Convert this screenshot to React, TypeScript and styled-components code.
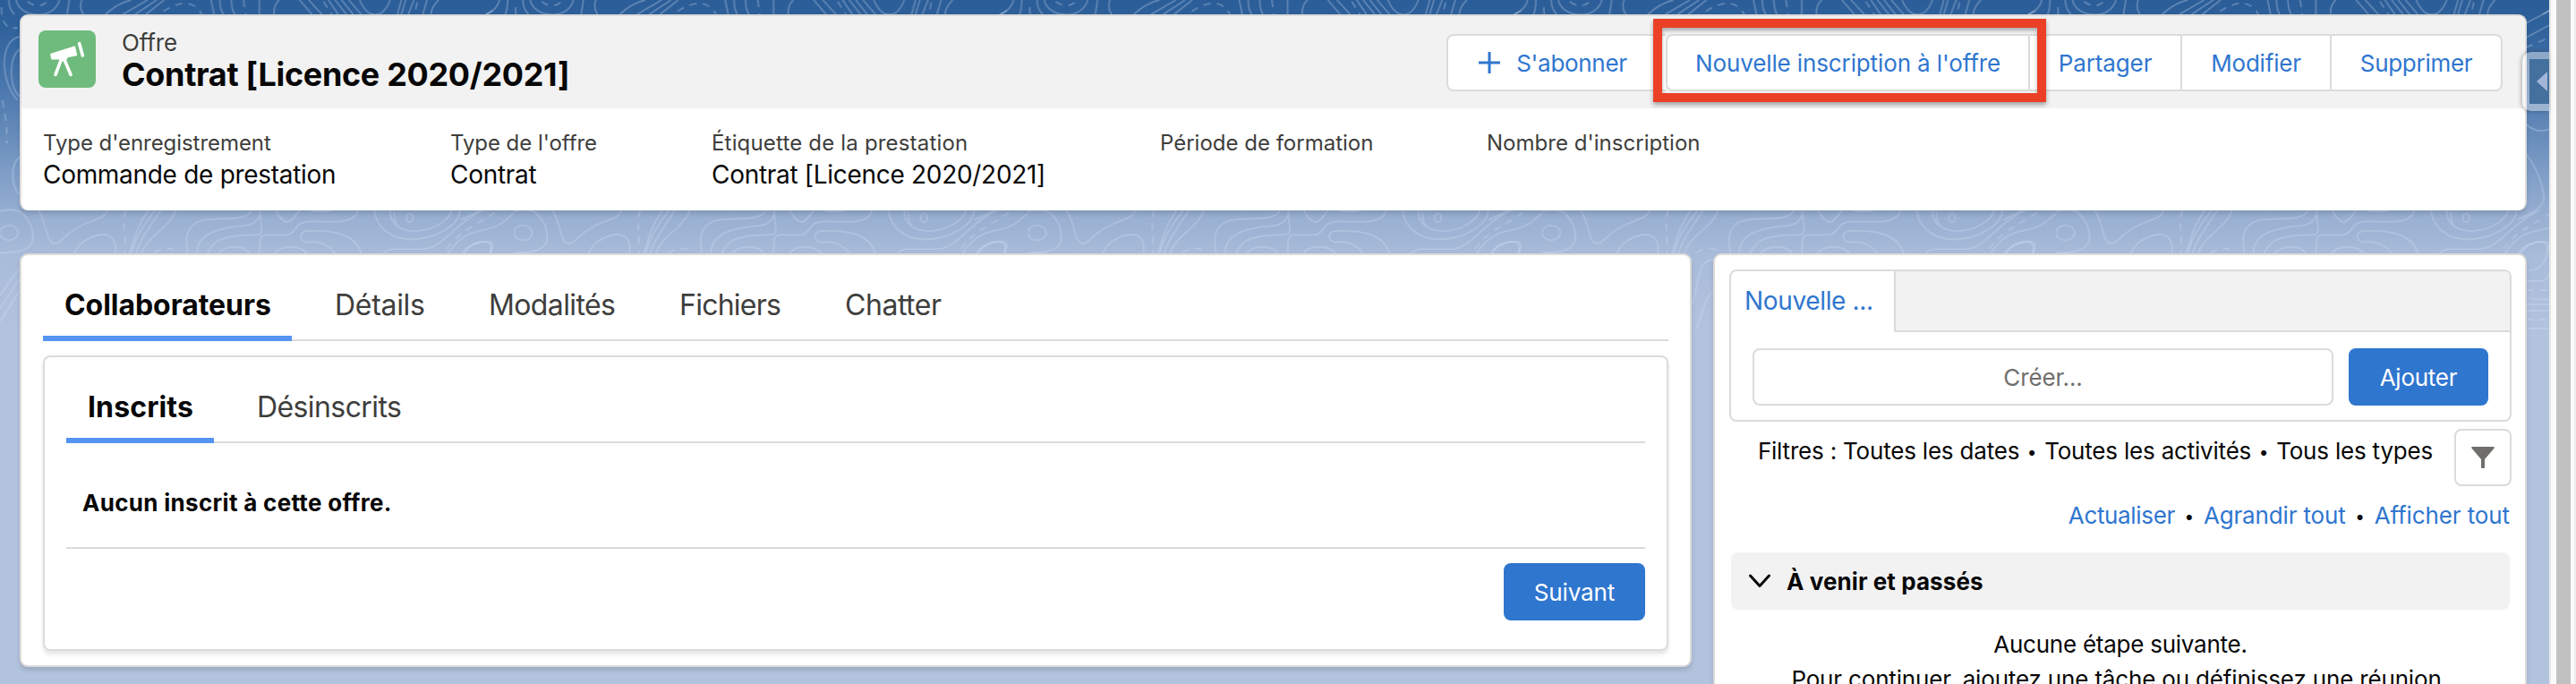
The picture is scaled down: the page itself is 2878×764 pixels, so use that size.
import React from "react";
import styled, { createGlobalStyle, css } from "styled-components";

const GlobalStyle = createGlobalStyle`
  * { box-sizing: border-box; }
  body {
    margin: 0;
    overflow: hidden;
    font-family: Inter, "Liberation Sans", sans-serif;
    font-size: 26px;
    color: #080707;
  }
`;

const line = "#dddbda";
const blue = "#2f76cf";

const Page = styled.div`
  display: flex;
  height: 764px;
  overflow: hidden;
`;

const Main = styled.main`
  position: relative;
  width: 2848px;
  height: 764px;
  padding: 16px 25px 0 22px;
  background: linear-gradient(
    #2b5d98 0px, #2f619b 30px, #4a77ad 98px, #6087b7 138px, #819fc8 198px,
    #97afd1 240px, #a8bbd9 283px, #b2c3de 370px
  );
`;

const Contours = styled.svg`
  position: absolute;
  inset: 0;
  fill: none;
  stroke: #d5e4f7;
  stroke-opacity: 0.3;
  stroke-width: 1.8;
`;

const Content = styled.div`
  position: relative;
`;

const cardBox = css`
  background: #fff;
  border: 2px solid ${line};
  border-radius: 9px;
  box-shadow: 0 4px 5px rgba(0, 0, 0, 0.12);
`;

const HeaderCard = styled.header`
  ${cardBox}
  width: 2801px;
  height: 219px;
  border-bottom: 0;
  overflow: visible;
`;

const HeaderTop = styled.div`
  display: flex;
  align-items: flex-start;
  height: 103px;
  padding: 0 25px 0 19px;
  background: #f2f2f2;
  border-radius: 7px 7px 0 0;
`;

const RecordIcon = styled.svg`
  width: 64px;
  height: 64px;
  margin: 16px 29px 0 0;
  border-radius: 8px;
  background: #6fbb7d;
`;

const RecordTitle = styled.div`
  flex: 1;
  padding-top: 15px;
`;

const Tracked = styled.span<{ $t?: number }>`
  letter-spacing: ${(p) => p.$t ?? 0}px;
  white-space: pre;
`;

const EntityName = styled.div`
  line-height: 30px;
  color: #3e3e3c;
`;

const RecordName = styled.h1`
  margin: 0;
  font-size: 36px;
  line-height: 40px;
`;

const ButtonGroup = styled.div`
  display: flex;
  height: 64px;
  margin-top: 20px;
`;

const GroupButton = styled.div<{ $w: number; $first?: boolean; $round?: "left" | "right" | "none" }>`
  position: relative;
  display: flex;
  align-items: center;
  justify-content: center;
  gap: 17px;
  width: ${(p) => p.$w}px;
  padding-right: ${(p) => (p.$first ? 10 : 0)}px;
  background: #fff;
  color: ${blue};
  border: 2px solid ${line};
  border-left-width: ${(p) => (p.$round === "left" ? 2 : 0)}px;
  border-right-width: ${(p) => (p.$first ? 0 : 2)}px;
  border-radius: ${(p) => (p.$round === "left" ? "8px 0 0 8px" : p.$round === "right" ? "0 8px 8px 0" : "0")};
`;

const Highlight = styled.div`
  position: absolute;
  z-index: 2;
  top: -19px;
  left: -16px;
  width: 439px;
  height: 93px;
  border: 10px solid #eb4026;
  box-shadow: 0 3px 5px rgba(0, 0, 0, 0.35), inset 0 3px 4px rgba(0, 0, 0, 0.3);
`;

const Fields = styled.dl`
  display: grid;
  grid-template-columns: 455px 292px 501px 365px 1fr;
  margin: 0;
  padding: 23px 0 0 24px;
`;

const FieldLabel = styled.dt`
  font-size: 24px;
  line-height: 32px;
  color: #3e3e3c;
`;

const FieldValue = styled.dd`
  margin: 1px 0 0;
  font-size: 28px;
  line-height: 36px;
`;

const Columns = styled.div`
  display: flex;
  gap: 24px;
  margin-top: 48px;
`;

const MainCard = styled.section`
  ${cardBox}
  width: 1868px;
  height: 462px;
  padding: 0 24px;
`;

const TabRow = styled.nav`
  display: flex;
  height: 96px;
  box-shadow: inset 0 -2px ${line};
`;

const Tab = styled.div<{ $w?: number; $active?: boolean }>`
  width: ${(p) => (p.$w ? p.$w + "px" : "auto")};
  padding: 22px 0 0 24px;
  font-size: 32px;
  line-height: 68px;
  color: #3e3e3c;
  ${(p) =>
    p.$active &&
    css`
      margin-right: 24px;
      border-bottom: 6px solid #5594f3;
      color: #080707;
      font-weight: 700;
    `}
`;

const InnerCard = styled.section`
  height: 330px;
  margin-top: 16px;
  padding: 0 24px;
  border: 2px solid ${line};
  border-radius: 8px;
  box-shadow: 0 4px 4px rgba(0, 0, 0, 0.1);
`;

const EmptyMessage = styled.p`
  height: 118px;
  margin: 0;
  padding: 18px 0 0 18px;
  border-bottom: 2px solid ${line};
  font-weight: 700;
  line-height: 98px;
`;

const Actions = styled.div`
  display: flex;
  justify-content: flex-end;
  padding-top: 16px;
`;

const BrandButton = styled.div<{ $w: number }>`
  display: flex;
  align-items: center;
  justify-content: center;
  width: ${(p) => p.$w}px;
  height: 64px;
  border-radius: 8px;
  background: ${blue};
  color: #fff;
`;

const SideCard = styled.aside`
  ${cardBox}
  width: 909px;
  height: 520px;
  padding: 16px 15px 0 16px;
`;

const Composer = styled.div`
  height: 170px;
  border: 2px solid ${line};
  border-radius: 8px;
  overflow: hidden;
`;

const ComposerTabs = styled.div`
  display: flex;
  height: 68px;
`;

const ComposerTab = styled.div`
  width: 184px;
  padding-left: 15px;
  border-right: 2px solid ${line};
  font-size: 28px;
  line-height: 67px;
  color: ${blue};
`;

const ComposerFill = styled.div`
  flex: 1;
  background: #f2f2f2;
  border-bottom: 2px solid ${line};
`;

const ComposerForm = styled.div`
  display: flex;
  justify-content: space-between;
  padding: 18px 24px 0;
`;

const CreateInput = styled.div`
  display: flex;
  align-items: center;
  justify-content: center;
  width: 649px;
  height: 64px;
  border: 2px solid ${line};
  border-radius: 8px;
  color: #706e6b;
`;

const FilterRow = styled.div`
  display: flex;
  justify-content: flex-end;
  gap: 24px;
  height: 64px;
  margin-top: 8px;
  line-height: 49px;
`;

const FilterButton = styled.div`
  display: flex;
  align-items: center;
  justify-content: center;
  width: 64px;
  height: 64px;
  border: 2px solid ${line};
  border-radius: 8px;
`;

const Dot = styled.span<{ $w: number }>`
  display: inline-block;
  width: ${(p) => p.$w}px;
  font-size: 19px;
  line-height: 20px;
  text-align: center;
  vertical-align: 1px;
  letter-spacing: 0;
  color: #080707;
`;

const Links = styled.div`
  height: 39px;
  margin: 13px 2px 0 0;
  line-height: 39px;
  text-align: right;
  color: ${blue};
`;

const SectionBar = styled.div`
  display: flex;
  align-items: center;
  gap: 18px;
  height: 64px;
  margin: 22px 2px 0;
  padding-left: 20px;
  border-radius: 8px;
  background: #f2f2f2;
  font-weight: 700;
`;

const NextSteps = styled.div`
  margin-top: 19px;
  line-height: 39px;
  text-align: center;
`;

const Hint = styled.div`
  margin-right: 9px;
`;

const PanelHandle = styled.div`
  position: absolute;
  top: 58px;
  right: 0;
  width: 30px;
  height: 66px;
  padding: 8px 0 8px 8px;
  border-radius: 10px 0 0 10px;
  background: rgba(255, 255, 255, 0.42);
  box-shadow: -1px 0 5px rgba(0, 0, 0, 0.3);
`;

const HandleFace = styled.svg`
  display: block;
  width: 22px;
  height: 50px;
  background: #43709d;
`;

const ScrollTrack = styled.div`
  display: flex;
  width: 30px;
  padding-left: 6px;
  background: #fafafa;
  border-left: 2px solid #e6e6e6;
  border-right: 2px solid #ededed;
`;

const ScrollThumb = styled.div`
  width: 16px;
  background: #c1c1c1;
`;

const bandLines = [
  "M0 18C60 0 80 30 95 65C108 110 105 140 60 152C40 157 20 155 0 158",
  "M118 15C145 60 140 125 168 126C190 126 195 90 260 60C300 42 318 40 328 15",
  "M228 158C245 110 300 92 325 97C352 104 355 130 352 158",
  "M452 15C410 80 410 120 395 158M490 15C450 80 425 120 415 158M473 15C440 60 410 110 402 158M535 15C520 70 450 100 432 158",
  "M766 15C750 60 640 30 600 55C560 80 568 120 572 158",
  "M793 15C790 60 810 98 780 97C650 97 650 130 632 158M740 67C650 75 600 100 600 158M740 67Q790 64 793 15",
  "M790 158C792 120 788 97 810 97L875 97C905 90 895 55 940 52L1030 53C1070 50 1085 35 1090 15",
  "M840 15C850 40 865 55 876 54C895 50 900 25 915 15M945 15Q975 20 1010 15",
  "M665 158C690 130 740 130 760 158M838 158C860 130 910 130 935 158",
  "M1020 158C1000 130 970 115 935 122C915 120 905 88 935 84C1020 80 1080 95 1100 158",
  "M1140 15C1145 80 1200 112 1250 112C1330 112 1400 60 1400 15",
  "M1188 15C1185 60 1220 86 1270 84C1330 80 1370 40 1375 15M1200 20C1200 60 1215 75 1220 75",
  "M1168 158C1180 135 1230 148 1290 145C1350 140 1380 60 1470 15",
  "M1365 158C1400 100 1430 90 1475 80C1530 70 1540 40 1568 22",
  "M1408 158C1425 125 1480 115 1495 122C1505 135 1495 150 1490 158",
];
const bandDashes = ["M385 15C370 50 385 90 380 158", "M470 158C490 138 530 138 545 158", "M1360 145C1400 80 1460 60 1515 15"];

const topLines = [
  "M28 0Q28 30 45 48M50 0C60 60 165 70 182 0M212 0L205 48M250 0Q240 25 255 48",
  "M400 0Q360 10 322 48M450 0L375 48M478 0L412 48M500 0L445 48",
  "M643 0L652 48M670 0Q670 30 680 48M705 0Q705 30 715 48M790 0V48M850 0Q832 20 835 48",
  "M912 0L950 48M940 0L980 48M1000 0L1030 48M1020 0L1055 48M1040 0L1075 48M1062 0L1100 48",
  "M1095 0C1120 65 1165 65 1188 0M1222 0L1210 48M1235 0L1222 48M1260 0L1243 48M1300 0L1287 48",
  "M1335 0Q1312 25 1312 48M1520 0Q1515 30 1480 48M1545 0Q1545 30 1538 48",
];
const topDashes = ["M85 5Q120 35 150 0", "M498 38Q580 -20 615 48", "M742 0L748 48", "M985 5L1010 48", "M1270 8L1262 48"];

const edgeLines = [
  "M22 41C0 45 0 90 20 112M22 55C10 65 10 95 22 108M22 175C12 185 12 205 22 218",
  "M22 300L0 330M22 312L0 345M22 325L0 360",
  "M191 290C175 290 176 310 168 340M191 325C180 335 180 350 172 368",
  "M525 26L551 12M525 42L551 28M525 139Q538 150 551 144M525 172C533 182 543 200 545 220C545 235 525 240 515 246",
  "M518 285C525 270 545 265 549 275C551 290 540 302 528 302M525 314H543Q551 312 551 305",
  "M525 332Q540 336 551 334M525 340H551M525 347H551M525 367H551",
];
const edgeDashes = ["M2 8Q2 35 20 31", "M3 112Q9 140 8 160", "M525 53L551 42", "M525 324H551", "M525 357H551"];

const Lines = ({ paths, dashed }: { paths: string[]; dashed?: boolean }) => (
  <>
    {paths.map((d) => (
      <path key={d} d={d} vectorEffect="non-scaling-stroke" strokeDasharray={dashed ? "8 7" : undefined} />
    ))}
  </>
);

const Backdrop = () => (
  <Contours width="2848" height="764">
    <defs>
      <pattern id="contours" x="-0.4" y="0" width="574.4" height="764" patternUnits="userSpaceOnUse">
        <g transform="scale(.36735 .33333)">
          <Lines paths={topLines} />
          <Lines paths={topDashes} dashed />
        </g>
        <g transform="translate(0 230) scale(.36735 .33333)">
          <Lines paths={bandLines} />
          <Lines paths={bandDashes} dashed />
          <ellipse cx="28" cy="90" rx="28" ry="25" vectorEffect="non-scaling-stroke" />
          <ellipse cx="1247" cy="40" rx="10" ry="15" vectorEffect="non-scaling-stroke" />
        </g>
        <Lines paths={edgeLines} />
        <Lines paths={edgeDashes} dashed />
      </pattern>
    </defs>
    <rect width="2848" height="764" fill="url(#contours)" stroke="none" />
  </Contours>
);

const fields = [
  { label: "Type d'enregistrement", lt: -0.06, value: "Commande de prestation", vt: -0.3 },
  { label: "Type de l'offre", lt: -0.06, value: "Contrat", vt: -0.3 },
  { label: "Étiquette de la prestation", lt: 0.177, value: "Contrat [Licence 2020/2021]", vt: -0.3 },
  { label: "Période de formation", lt: 0, value: "", vt: 0 },
  { label: "Nombre d'inscription", lt: 0.03, value: "", vt: 0 },
];

export default function App() {
  return (
    <Page>
      <GlobalStyle />
      <Main>
        <Backdrop />
        <Content>
          <HeaderCard>
            <HeaderTop>
              <RecordIcon viewBox="129 102 192 192">
                <path
                  d="M171 182L250 157L256 184L226 190L219 203H205L198 196L174 197Z"
                  fill="#fff"
                  stroke="#fff"
                  strokeWidth="5"
                  strokeLinejoin="round"
                />
                <path d="M204 202L186 250M217 202L237 250" stroke="#fff" strokeWidth="11" strokeLinecap="round" />
                <path d="M266 146L277 186" stroke="#fff" strokeWidth="11" strokeLinecap="round" />
              </RecordIcon>
              <RecordTitle>
                <EntityName><Tracked $t={-0.1}>Offre</Tracked></EntityName>
                <RecordName><Tracked $t={-0.32}>Contrat [Licence 2020/2021]</Tracked></RecordName>
              </RecordTitle>
              <ButtonGroup>
                <GroupButton $w={245} $round="left" $first>
                  <svg width="26" height="26" viewBox="0 0 26 26" stroke="currentColor" strokeWidth="3">
                    <path d="M13 1V25M1 13H25" />
                  </svg>
                  <Tracked $t={-0.3}>S'abonner</Tracked>
                </GroupButton>
                <GroupButton $w={407} $round="left">
                  <Tracked $t={-0.12}>Nouvelle inscription à l'offre</Tracked>
                  <Highlight />
                </GroupButton>
                <GroupButton $w={170}><Tracked $t={-0.1}>Partager</Tracked></GroupButton>
                <GroupButton $w={167}><Tracked $t={-0.2}>Modifier</Tracked></GroupButton>
                <GroupButton $w={191} $round="right"><Tracked $t={-0.29}>Supprimer</Tracked></GroupButton>
              </ButtonGroup>
            </HeaderTop>
            <Fields>
              {fields.map((f) => (
                <div key={f.label}>
                  <FieldLabel><Tracked $t={f.lt}>{f.label}</Tracked></FieldLabel>
                  <FieldValue><Tracked $t={f.vt}>{f.value}</Tracked></FieldValue>
                </div>
              ))}
            </Fields>
          </HeaderCard>

          <Columns>
            <MainCard>
              <TabRow>
                <Tab $active $w={278}><Tracked $t={-0.05}>Collaborateurs</Tracked></Tab>
                <Tab $w={172}><Tracked $t={-0.3}>Détails</Tracked></Tab>
                <Tab $w={213}><Tracked $t={-0.62}>Modalités</Tracked></Tab>
                <Tab $w={185}><Tracked $t={-0.75}>Fichiers</Tracked></Tab>
                <Tab><Tracked $t={-0.46}>Chatter</Tracked></Tab>
              </TabRow>
              <InnerCard>
                <TabRow>
                  <Tab $active $w={165}><Tracked $t={0.13}>Inscrits</Tracked></Tab>
                  <Tab><Tracked $t={-0.59}>Désinscrits</Tracked></Tab>
                </TabRow>
                <EmptyMessage><Tracked $t={0.3}>Aucun inscrit à cette offre.</Tracked></EmptyMessage>
                <Actions>
                  <BrandButton $w={158}><Tracked $t={-0.13}>Suivant</Tracked></BrandButton>
                </Actions>
              </InnerCard>
            </MainCard>

            <SideCard>
              <Composer>
                <ComposerTabs>
                  <ComposerTab><Tracked $t={-0.35}>Nouvelle ...</Tracked></ComposerTab>
                  <ComposerFill />
                </ComposerTabs>
                <ComposerForm>
                  <CreateInput><Tracked $t={-0.1}>Créer...</Tracked></CreateInput>
                  <BrandButton $w={156}><Tracked $t={-0.25}>Ajouter</Tracked></BrandButton>
                </ComposerForm>
              </Composer>
              <FilterRow>
                <Tracked $t={-0.2}>
                  Filtres : Toutes les dates<Dot $w={28}>•</Dot>Toutes les activités<Dot $w={28}>•</Dot>Tous les types
                </Tracked>
                <FilterButton>
                  <svg width="26" height="24" viewBox="0 0 26 24" fill="#706e6b">
                    <path d="M0.5 0H25.5Q26 1 25.3 2L15 14V23Q15 24 14 24H12Q11 24 11 23V14L0.7 2Q0 1 0.5 0Z" />
                  </svg>
                </FilterButton>
              </FilterRow>
              <Links>
                <Tracked $t={-0.35}>Actualiser</Tracked>
                <Dot $w={32}>•</Dot>
                <Tracked $t={-0.15}>Agrandir tout</Tracked>
                <Dot $w={32}>•</Dot>
                <Tracked $t={-0.1}>Afficher tout</Tracked>
              </Links>
              <SectionBar>
                <svg width="24" height="16" viewBox="0 0 24 16" fill="none" stroke="#080707" strokeWidth="3">
                  <path d="M1.5 2L12 13.5L22.5 2" strokeLinecap="round" strokeLinejoin="round" />
                </svg>
                <Tracked $t={0.08}>À venir et passés</Tracked>
              </SectionBar>
              <NextSteps>
                <Tracked $t={-0.25}>Aucune étape suivante.</Tracked>
                <Hint><Tracked $t={-0.17}>Pour continuer, ajoutez une tâche ou définissez une réunion</Tracked></Hint>
              </NextSteps>
            </SideCard>
          </Columns>
        </Content>
        <PanelHandle>
          <HandleFace viewBox="0 0 22 50">
            <path d="M8 25L20 14V36Z" fill="#a3b5d8" />
          </HandleFace>
        </PanelHandle>
      </Main>
      <ScrollTrack>
        <ScrollThumb />
      </ScrollTrack>
    </Page>
  );
}
